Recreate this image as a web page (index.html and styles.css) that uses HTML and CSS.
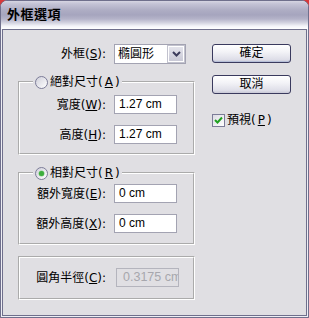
FILE: index.html
```html
<!DOCTYPE html>
<html>
<head>
    <title>外框選項</title>
    <meta charset="utf-8">
    <link rel="stylesheet" href="styles.css">
</head>
<body>
    <div class="window">
        <div class="titlebar"><span class="title">外框選項</span></div>

        <div class="client">
            <div class="main">
                <div class="row top-row">
                    <span class="lbl">外框(<u>S</u>):</span>
                    <div class="select">
                        <span class="select-text">橢圓形</span>
                        <span class="select-btn">
                            <svg width="9" height="6" viewBox="0 0 9 6"><path d="M1 1 L4.5 4.5 L8 1" fill="none" stroke="#3c3c5c" stroke-width="2"/></svg>
                        </span>
                    </div>
                </div>

                <fieldset class="group g1">
                    <legend><span class="radio"></span>絕對尺寸(<u>A</u>)</legend>
                    <div class="row">
                        <span class="lbl">寬度(<u>W</u>):</span>
                        <div class="field">1.27 cm</div>
                    </div>
                    <div class="row">
                        <span class="lbl">高度(<u>H</u>):</span>
                        <div class="field">1.27 cm</div>
                    </div>
                </fieldset>

                <fieldset class="group g2">
                    <legend><span class="radio on"></span>相對尺寸(<u>R</u>)</legend>
                    <div class="row">
                        <span class="lbl">額外寬度(<u>E</u>):</span>
                        <div class="field">0 cm</div>
                    </div>
                    <div class="row">
                        <span class="lbl">額外高度(<u>X</u>):</span>
                        <div class="field">0 cm</div>
                    </div>
                </fieldset>

                <fieldset class="group g3">
                    <div class="row">
                        <span class="lbl">圓角半徑(<u>C</u>):</span>
                        <div class="field disabled">0.3175 cm</div>
                    </div>
                </fieldset>
            </div>

            <div class="side">
                <div class="btn default">確定</div>
                <div class="btn">取消</div>
                <div class="check">
                    <span class="checkbox">
                        <svg width="11" height="11" viewBox="0 0 11 11"><path d="M2 5 L4.5 7.5 L9 2.5" fill="none" stroke="#21a121" stroke-width="2"/></svg>
                    </span>
                    預視(<u>P</u>)
                </div>
            </div>
        </div>
    </div>
</body>
</html>
```

FILE: styles.css
```css
html, body { margin: 0; }
body { background: #d8393a; font-family: "DejaVu Sans", "Noto Sans CJK TC", sans-serif; font-size: 12px; line-height: 14px; color: #000; }
u { text-decoration: underline; text-underline-offset: 1px; }

.window { width: 309px; height: 318px; box-sizing: border-box; border: 1px solid #6f6f8c; border-radius: 7px 7px 0 0; background: #eeeef4; display: flex; flex-direction: column; overflow: hidden; }
.titlebar { height: 28px; flex: none; display: flex; align-items: center; padding-left: 6px;
    background: linear-gradient(to bottom, #d6d5e2 0px, #c3c2d5 3px, #aeadc4 9px, #a6a5be 14px, #b4b3c9 18px, #d5d5e1 22px, #f3f3f8 25px, #ffffff 28px); }
.title { font-weight: bold; font-size: 13px; letter-spacing: 0.5px; }

.client { flex: 1; margin: 0 1px 1px; border: 1px solid #6f6f8c; background: #e0dfe3; display: flex; gap: 17px; padding: 14px 0 0 15px; }
.main { width: 177px; }

.row { display: flex; align-items: center; gap: 8px; }
.lbl { width: 86px; text-align: right; white-space: nowrap; }
.top-row { height: 20px; }
.top-row .lbl { width: 88px; }

.select { width: 72px; height: 20px; box-sizing: border-box; border: 1px solid #a3a3b2; background: #fff; display: flex; }
.select-text { flex: 1; padding-left: 3px; line-height: 18px; }
.select-btn { width: 16px; margin: 1px; border: 1px solid #fff; background: linear-gradient(to bottom, #e4e4ec, #c9c9d6); display: flex; align-items: center; justify-content: center; box-sizing: border-box; box-shadow: 0 0 0 1px #c2c2ce; }

.group { margin: 11px 0 0; padding: 0; border: 2px groove #fff; min-inline-size: 0; }
.group legend { margin-left: 13px; padding: 0 2px; display: flex; align-items: center; gap: 2px; line-height: 14px; }
.g1 { padding: 6px 0 9px; }
.g1 .row + .row { margin-top: 11px; }
.g2 { padding: 4px 0 10px; }
.g2 .row + .row { margin-top: 11px; }
.g3 { padding: 10px 0 11px; }
.g3 .row { gap: 10px; }

.field { width: 63px; height: 19px; box-sizing: border-box; border: 1px solid #a3a3b2; background: #fff; padding-left: 4px; line-height: 17px; white-space: nowrap; overflow: hidden; font-family: "Liberation Sans", sans-serif; }
.field.disabled { background: #e0dfe3; border-color: #b4b4bd; color: #a7a7ad; padding-left: 6px; font-size: 12.5px; }

.radio { width: 13px; height: 13px; box-sizing: border-box; border-radius: 50%; border: 1px solid #7c7c98; background: linear-gradient(135deg, #cfcfda, #ffffff); position: relative; }
.radio.on::after { content: ""; position: absolute; left: 3px; top: 3px; width: 5px; height: 5px; border-radius: 50%; background: #3dae3d; box-shadow: 0 0 0 0.5px #8fd08f; }

.side { width: 79px; display: flex; flex-direction: column; }
.btn { height: 19px; box-sizing: border-box; border: 1px solid #3a3a5e; border-radius: 3px; background: linear-gradient(to bottom, #ffffff 0%, #f3f3f7 40%, #dedee8 85%, #c8c8d6 100%); text-align: center; line-height: 17px; }
.btn + .btn { margin-top: 12px; }
.btn.default { box-shadow: inset 0 -1px 0 #b6bfd8; }
.check { margin-top: 19px; display: flex; align-items: center; gap: 2px; }
.checkbox { width: 13px; height: 13px; box-sizing: border-box; border: 1px solid #7c7c98; background: linear-gradient(135deg, #dcdce4, #ffffff); display: flex; align-items: center; justify-content: center; }
```
